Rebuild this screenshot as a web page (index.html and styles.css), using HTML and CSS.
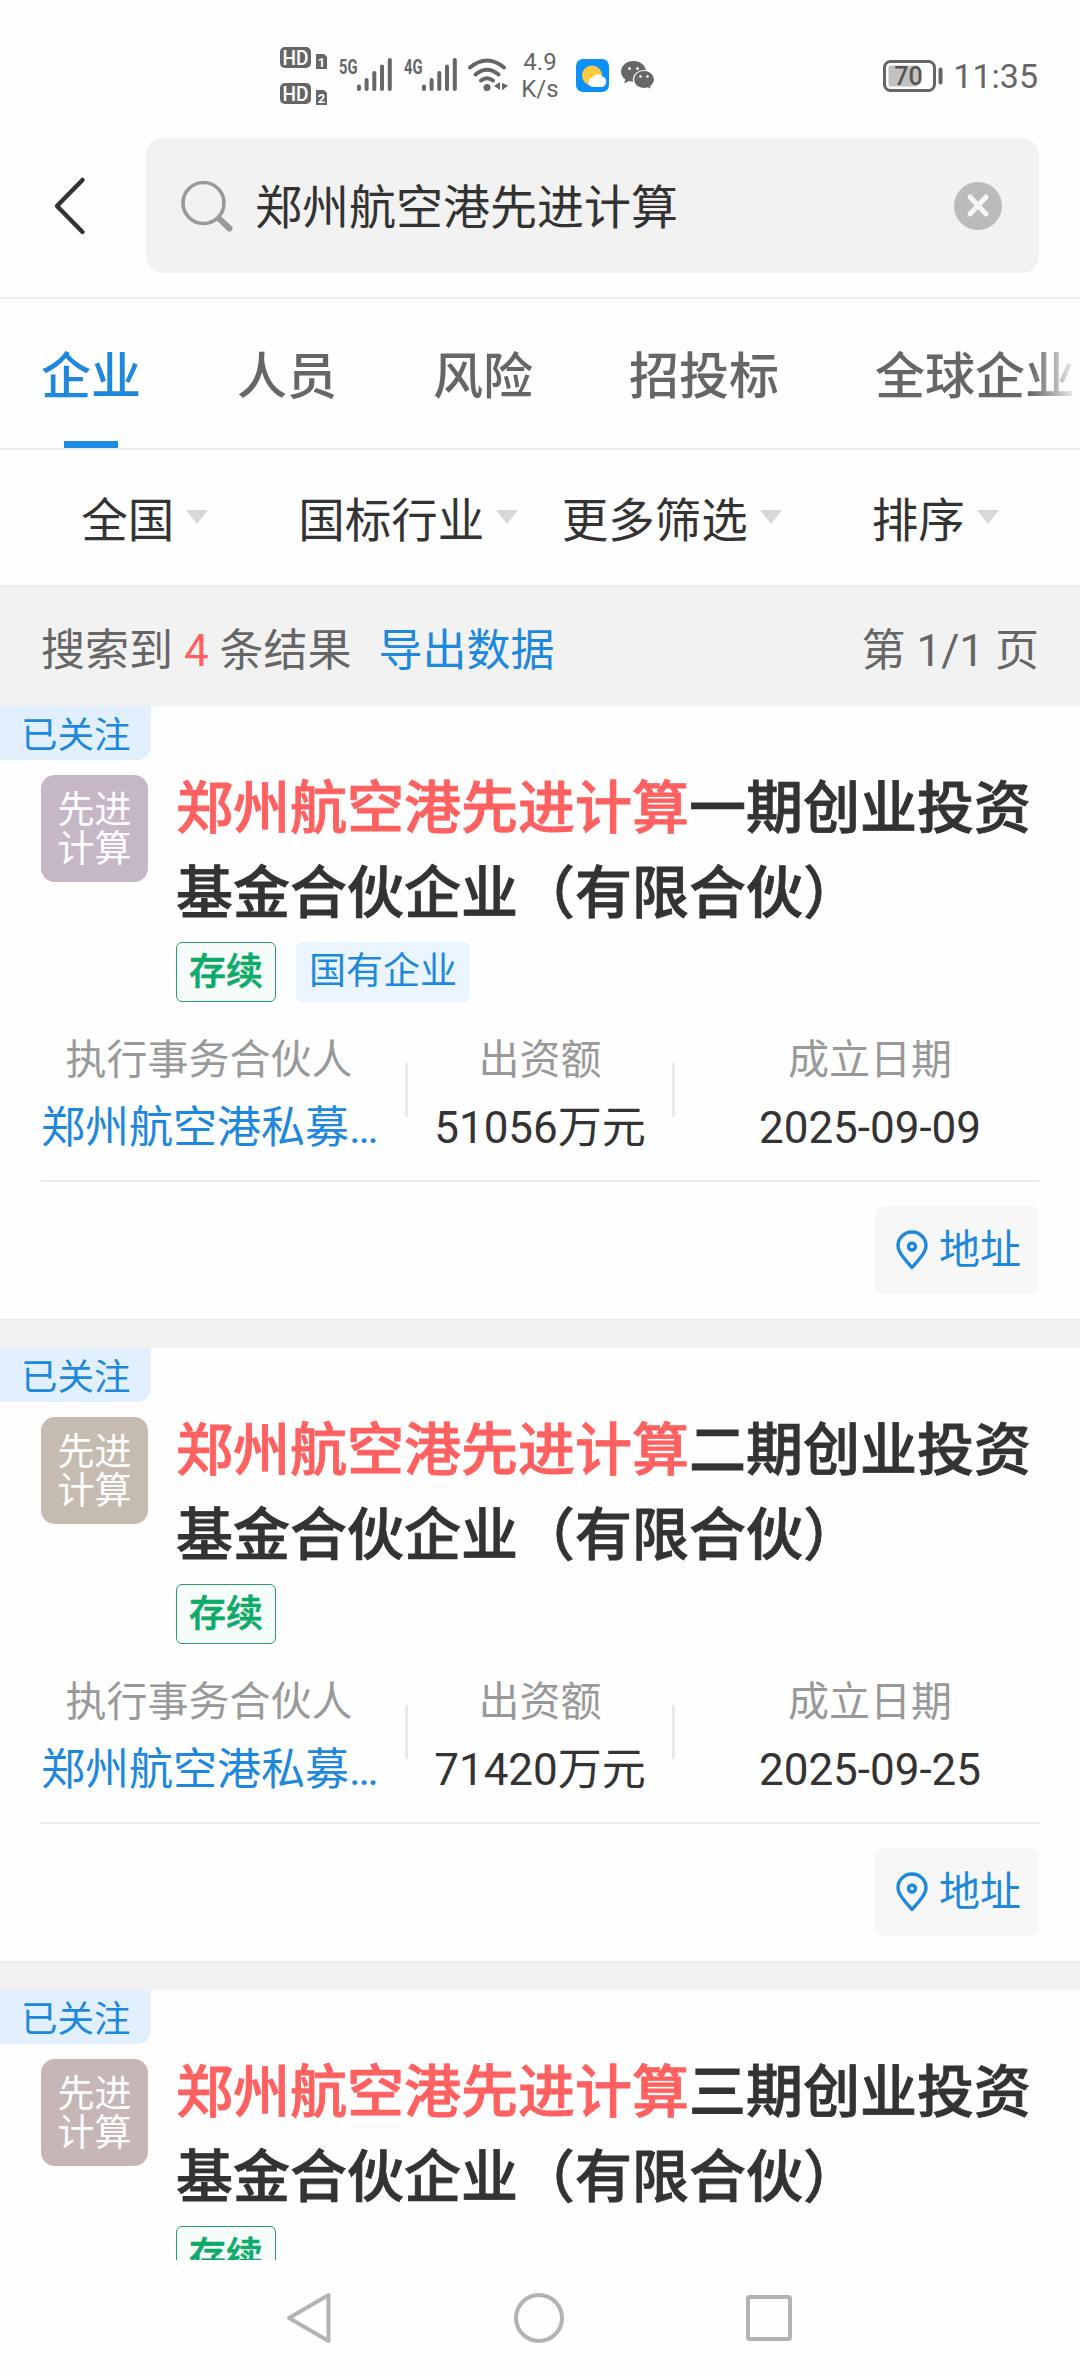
FILE: index.html
```html
<!DOCTYPE html>
<html lang="zh-CN">
<head>
    <meta charset="UTF-8">
    <meta name="viewport" content="width=device-width, initial-scale=1.0">
    <title>郑州航空港先进计算</title>
    <link rel="stylesheet" href="styles.css">
</head>
<body>
    <!-- 图标 -->
    <svg class="sprite" width="0" height="0">
        <symbol id="signal" viewBox="0 0 35 33">
            <path d="M2 28.500v2.500M9.600 22v9M17.300 15v16M25 8.500v22.500M32.800 2v29" stroke="#666" stroke-width="4" stroke-linecap="round"/>
        </symbol>
        <symbol id="pin" viewBox="0 0 32 40">
            <path d="M16 37.500C9 29.500 2 22.500 2 15.500a14 13.500 0 0 1 28 0C30 22.500 23 29.500 16 37.500z" fill="none" stroke="#1e88dc" stroke-width="3.400" stroke-linejoin="round"/>
            <circle cx="16" cy="16.500" r="3.500" fill="none" stroke="#1e88dc" stroke-width="3.400"/>
        </symbol>
    </svg>

    <div class="status-bar">
        <svg class="hd" width="49" height="60" viewBox="0 0 49 60">
            <rect x="0" y="0" width="31" height="21" rx="5" fill="#666"/>
            <text x="15.500" y="17.500" class="hd-text" textLength="26" lengthAdjust="spacingAndGlyphs">HD</text>
            <path d="M36 7h8l3 3v12h-11z" fill="#666"/>
            <text x="41.500" y="19.500" class="sim-text">1</text>
            <rect x="0" y="36" width="31" height="21" rx="5" fill="#666"/>
            <text x="15.500" y="53.500" class="hd-text" textLength="26" lengthAdjust="spacingAndGlyphs">HD</text>
            <path d="M36 43h8l3 3v12h-11z" fill="#666"/>
            <text x="41.500" y="55.500" class="sim-text">2</text>
        </svg>
        <div class="network">
            <svg width="19" height="17" viewBox="0 0 19 17"><text x="0" y="15.500" class="net-text" textLength="18.500" lengthAdjust="spacingAndGlyphs">5G</text></svg>
            <svg width="35" height="33"><use href="#signal"/></svg>
        </div>
        <div class="network">
            <svg width="19" height="17" viewBox="0 0 19 17"><text x="0" y="15.500" class="net-text" textLength="18.500" lengthAdjust="spacingAndGlyphs">4G</text></svg>
            <svg width="35" height="33"><use href="#signal"/></svg>
        </div>
        <svg class="wifi" width="40" height="34" viewBox="0 0 40 34">
            <g fill="none" stroke="#666" stroke-width="4" stroke-linecap="round">
                <path d="M2 9.500Q19 -4.500 36 9.500"/>
                <path d="M7.500 16.500Q19 7 30.500 16.500"/>
                <path d="M13 22.500Q19 18 25 22.500"/>
            </g>
            <circle cx="19" cy="29.500" r="3.500" fill="#666"/>
            <path d="M32 24v8l-6-4zM34 25l6 2.500-6 5z" fill="#666"/>
        </svg>
        <div class="speed">4.9<br>K/s</div>
        <svg class="weather" width="33" height="33" viewBox="0 0 33 33">
            <rect width="33" height="33" rx="7" fill="#0a91fb"/>
            <circle cx="16" cy="16.500" r="10" fill="#fdcb3d"/>
            <path d="M17 28a4.800 4.800 0 0 1-.5-9.500 6 6 0 0 1 10-1 5.500 5.500 0 0 1-.5 10.500z" fill="#fff"/>
        </svg>
        <svg class="wechat" width="34" height="29" viewBox="0 0 34 29">
            <path d="M12.500 0C5.500 0 0 4.700 0 10.600c0 3.400 1.700 6 4.300 7.900L3.300 22.400l4.600-2.300c1.500.5 3 .7 4.600.7C19.500 20.800 25 16.300 25 10.600S19.500 0 12.500 0z" fill="#666"/>
            <path d="M23 9.500c-6 0-10.500 4-10.500 9s4.500 9 10.500 9c1.300 0 2.600-.2 3.700-.5l3.800 1.700-.8-3.200c2.300-1.800 3.800-4 3.800-7C33.500 13.500 29 9.500 23 9.500z" fill="#666" stroke="#fff" stroke-width="1.200"/>
            <circle cx="8.500" cy="7.500" r="1.500" fill="#fff"/>
            <circle cx="16.500" cy="7.500" r="1.500" fill="#fff"/>
            <circle cx="19.500" cy="15.500" r="1.300" fill="#fff"/>
            <circle cx="26.500" cy="15.500" r="1.300" fill="#fff"/>
        </svg>
        <svg class="battery" width="60" height="32" viewBox="0 0 60 32">
            <rect x="1.500" y="1.500" width="50" height="29" rx="6" fill="none" stroke="#666" stroke-width="3"/>
            <rect x="5.500" y="5.500" width="30" height="21" rx="2" fill="#c2c2c2"/>
            <path d="M57.500 9.500v13" stroke="#666" stroke-width="4" stroke-linecap="round"/>
            <text x="25.500" y="25" class="battery-text">70</text>
        </svg>
        <span class="clock">11:35</span>
    </div>

    <div class="header">
        <svg class="back" width="32" height="58" viewBox="0 0 32 58">
            <path d="M28.500 3L3 29l25.500 26" fill="none" stroke="#333" stroke-width="4.500" stroke-linecap="round" stroke-linejoin="round"/>
        </svg>
        <div class="search-box">
            <svg width="52" height="52" viewBox="0 0 52 52">
                <circle cx="22.500" cy="23" r="20.500" fill="none" stroke="#999" stroke-width="3.600"/>
                <path d="M38 38.500l10.500 10" stroke="#999" stroke-width="6" stroke-linecap="round"/>
            </svg>
            <span class="keyword">郑州航空港先进计算</span>
            <svg width="48" height="48" viewBox="0 0 48 48">
                <circle cx="24" cy="24" r="24" fill="#bbb"/>
                <path d="M16 15l16 17M32 15L16 32" stroke="#f6f6f6" stroke-width="5" stroke-linecap="round"/>
            </svg>
        </div>
    </div>

    <div class="tabs">
        <span class="tab active">企业</span>
        <span class="tab">人员</span>
        <span class="tab">风险</span>
        <span class="tab">招投标</span>
        <span class="tab">全球企业</span>
    </div>

    <div class="filters">
        <div class="filter">全国<i class="arrow"></i></div>
        <div class="filter">国标行业<i class="arrow"></i></div>
        <div class="filter">更多筛选<i class="arrow"></i></div>
        <div class="filter">排序<i class="arrow"></i></div>
    </div>

    <div class="summary">
        <span>搜索到 <b>4</b> 条结果</span>
        <a class="export">导出数据</a>
        <span class="page">第 1/1 页</span>
    </div>

    <div class="list">
        <div class="card">
            <span class="followed">已关注</span>
            <div class="company">
                <div class="logo logo-purple">先进<br>计算</div>
                <div class="company-main">
                    <h3><em>郑州航空港先进计算</em>一期创业投资基金合伙企业（有限合伙）</h3>
                    <div class="labels">
                        <span class="label status">存续</span>
                        <span class="label type">国有企业</span>
                    </div>
                </div>
            </div>
            <div class="info">
                <div class="info-item partner"><p>执行事务合伙人</p><a>郑州航空港私募…</a></div>
                <div class="info-item capital"><p>出资额</p><span>51056万元</span></div>
                <div class="info-item date"><p>成立日期</p><span>2025-09-09</span></div>
            </div>
            <div class="actions">
                <a class="address"><svg width="32" height="40"><use href="#pin"/></svg>地址</a>
            </div>
        </div>

        <div class="card">
            <span class="followed">已关注</span>
            <div class="company">
                <div class="logo logo-sand">先进<br>计算</div>
                <div class="company-main">
                    <h3><em>郑州航空港先进计算</em>二期创业投资基金合伙企业（有限合伙）</h3>
                    <div class="labels">
                        <span class="label status">存续</span>
                    </div>
                </div>
            </div>
            <div class="info">
                <div class="info-item partner"><p>执行事务合伙人</p><a>郑州航空港私募…</a></div>
                <div class="info-item capital"><p>出资额</p><span>71420万元</span></div>
                <div class="info-item date"><p>成立日期</p><span>2025-09-25</span></div>
            </div>
            <div class="actions">
                <a class="address"><svg width="32" height="40"><use href="#pin"/></svg>地址</a>
            </div>
        </div>

        <div class="card">
            <span class="followed">已关注</span>
            <div class="company">
                <div class="logo logo-rose">先进<br>计算</div>
                <div class="company-main">
                    <h3><em>郑州航空港先进计算</em>三期创业投资基金合伙企业（有限合伙）</h3>
                    <div class="labels">
                        <span class="label status">存续</span>
                    </div>
                </div>
            </div>
        </div>
    </div>

    <div class="nav-bar">
        <svg width="50" height="54" viewBox="0 0 50 54">
            <path d="M44.500 4v46L5 27z" fill="none" stroke="#b3b3b3" stroke-width="4" stroke-linejoin="round"/>
        </svg>
        <svg width="54" height="54" viewBox="0 0 54 54">
            <circle cx="27" cy="27" r="23" fill="none" stroke="#b3b3b3" stroke-width="4"/>
        </svg>
        <svg width="50" height="54" viewBox="0 0 50 54">
            <rect x="4" y="6" width="42" height="42" rx="1.500" fill="none" stroke="#b3b3b3" stroke-width="4"/>
        </svg>
    </div>
</body>
</html>
```
FILE: styles.css
```css
* {
    box-sizing: border-box;
}
body {
    display: flex;
    flex-direction: column;
    width: 1080px;
    height: 2376px;
    margin: 0;
    overflow: hidden;
    background: #fefefe;
    color: #333;
    font-family: Roboto, "Noto Sans CJK SC", sans-serif;
}
svg {
    display: block;
    flex-shrink: 0;
    overflow: visible;
}
.sprite {
    position: absolute;
}

/* status bar */
.status-bar {
    display: flex;
    height: 138px;
    padding: 47px 42px 0 280px;
    color: #666;
}
.hd-text {
    font: 500 20px Roboto, sans-serif;
    fill: #fff;
    text-anchor: middle;
}
.sim-text {
    font: 700 13px Roboto, sans-serif;
    fill: #fff;
    text-anchor: middle;
}
.net-text {
    font: 700 20px Roboto, sans-serif;
    fill: #666;
}
.network {
    display: flex;
    margin: 11px 0 0 10px;
}
.network + .network {
    margin-left: 12px;
}
.network svg + svg {
    margin-left: -1px;
}
.wifi {
    margin: 11px 0 0 11px;
}
.speed {
    width: 40px;
    margin: 2px 0 0 12px;
    font-size: 24px;
    line-height: 27px;
    text-align: center;
}
.weather {
    margin: 12px 0 0 16px;
}
.wechat {
    margin: 14px 0 0 12px;
}
.battery {
    margin: 13px 0 0 auto;
}
.battery-text {
    font: 500 25px Roboto, sans-serif;
    fill: #555;
    text-anchor: middle;
}
.clock {
    margin: 9px 0 0 10px;
    font-size: 34px;
    line-height: 40px;
}

/* search */
.header {
    display: flex;
    align-items: center;
    height: 161px;
    padding: 0 41px 24px 54px;
    border-bottom: 2px solid #eee;
}
.search-box {
    display: flex;
    flex: 1;
    align-items: center;
    height: 135px;
    margin-left: 60px;
    padding: 0 37px 0 35px;
    border-radius: 17px;
    background: #f2f2f2;
}
.keyword {
    flex: 1;
    margin-left: 22px;
    padding-top: 5px;
    font-size: 47px;
    line-height: 60px;
}

/* tabs */
.tabs {
    position: relative;
    display: flex;
    gap: 96px;
    height: 151px;
    padding-left: 41px;
    overflow: hidden;
    border-bottom: 2px solid #eee;
}
.tabs::after {
    content: "";
    position: absolute;
    top: 0;
    right: 0;
    width: 50px;
    height: 100%;
    background: linear-gradient(to right, rgba(254, 254, 254, 0), #fefefe);
}
.tab {
    display: flex;
    flex-direction: column;
    flex-shrink: 0;
    align-items: center;
    color: #666;
    font-size: 50px;
    font-weight: 500;
    line-height: 156px;
    white-space: nowrap;
}
.tab.active {
    color: #1e88dc;
}
.tab.active::after {
    content: "";
    width: 54px;
    height: 7px;
    margin-top: -14px;
    background: #1e88e5;
}

/* filters */
.filters {
    display: grid;
    grid-template-columns: repeat(4, 1fr);
    height: 137px;
    padding: 0 13px;
    border-bottom: 2px solid #ececec;
}
.filter {
    display: flex;
    align-items: center;
    justify-content: center;
    padding-bottom: 2px;
    font-size: 46.500px;
}
.arrow {
    margin: 0 0 0 12px;
    border: 11px solid transparent;
    border-top: 14px solid #d8d8d8;
    border-bottom: 0;
}

.summary {
    display: flex;
    align-items: center;
    height: 119px;
    padding: 0 41px;
    background: #f2f2f2;
    color: #666;
    font-size: 44px;
}
.summary b {
    color: #ff6060;
    font-weight: 400;
}
.export {
    margin-left: 27px;
    color: #1e88dc;
}
.page {
    margin-left: auto;
}

/* results */
.list {
    height: 1554px;
    overflow: hidden;
    background: #f2f2f2;
}
.card {
    height: 615px;
    margin-bottom: 27px;
    border-bottom: 2px solid #ececec;
    background: #fefefe;
}
.followed {
    display: block;
    width: 151px;
    height: 54px;
    padding-left: 21px;
    border-bottom-right-radius: 14px;
    background: #e1f0fc;
    color: #1e88dc;
    font-size: 36.500px;
    line-height: 59px;
}
.company {
    display: flex;
    padding: 6px 41px 0;
}
.logo {
    flex-shrink: 0;
    width: 107px;
    height: 107px;
    margin-top: 9px;
    padding-top: 16px;
    border-radius: 14px;
    color: #fff;
    font-size: 37px;
    line-height: 39px;
    text-align: center;
}
.logo-purple {
    background: #c6b7c7;
}
.logo-sand {
    background: #c6bbb0;
}
.logo-rose {
    background: #c6b6b6;
}
.company-main {
    flex: 1;
    margin-left: 28px;
}
h3 {
    width: 870px;
    margin: 0;
    font-size: 57px;
    font-weight: 500;
    line-height: 85px;
    -webkit-text-stroke: 0.8px;
}
h3 em {
    color: #ff6060;
    font-style: normal;
}
.labels {
    display: flex;
    gap: 20px;
    margin-top: 6px;
}
.label {
    height: 60px;
    border-radius: 6px;
    font-size: 37px;
    line-height: 60px;
    text-align: center;
}
.status {
    width: 100px;
    border: 1px solid #2a9b6c;
    background: #f5fcfa;
    color: #0eaa68;
    font-weight: 500;
    line-height: 60px;
    -webkit-text-stroke: 0.6px;
}
.type {
    width: 174px;
    background: #eaf5ff;
    color: #1e88dc;
}
.info {
    display: flex;
    margin: 22px 41px 0;
    padding: 2px 0 18px;
    border-bottom: 2px solid #ececec;
    text-align: center;
    white-space: nowrap;
}
.info-item {
    position: relative;
    font-size: 44px;
    line-height: 68px;
}
.info-item p {
    margin: 0;
    color: #999;
    font-size: 41px;
}
.info-item a {
    color: #1e88dc;
}
.partner {
    width: 336px;
}
.capital {
    width: 270px;
    margin-left: 28px;
    border: solid #eaeaea;
    border-width: 0 3px;
    border-image: linear-gradient(transparent 37px, #eaeaea 37px, #eaeaea 91px, transparent 91px) 0 3;
}
.date {
    flex: 1;
    margin-left: 26px;
}
.actions {
    display: flex;
    justify-content: flex-end;
    padding: 24px 41px;
}
.address {
    display: flex;
    align-items: center;
    width: 164px;
    height: 88px;
    padding-left: 21px;
    border-radius: 8px;
    background: #f7f7f7;
    color: #1e88dc;
    font-size: 41px;
    line-height: 84px;
}
.address svg {
    margin-right: 11px;
}

/* system navigation */
.nav-bar {
    display: flex;
    align-items: flex-start;
    justify-content: space-between;
    height: 116px;
    padding: 31px 286px 0 284px;
    background: #fefefe;
}
```
